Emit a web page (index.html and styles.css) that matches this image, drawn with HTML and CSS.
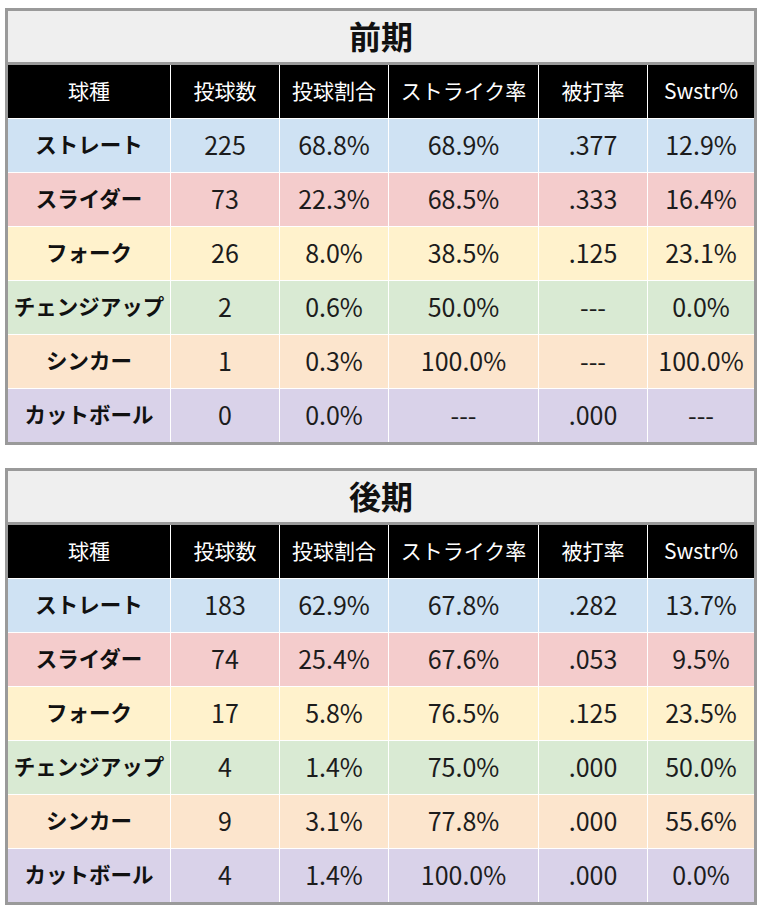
FILE: index.html
```html
<!DOCTYPE html>
<html lang="ja">
<head>
<meta charset="utf-8">
<title>球種別成績</title>
<link rel="stylesheet" href="styles.css">
</head>
<body>
<section class="stats">
  <h2 class="stats-title">前期</h2>
  <div class="grid">
    <div class="hd">球種</div><div class="hd">投球数</div><div class="hd">投球割合</div><div class="hd">ストライク率</div><div class="hd">被打率</div><div class="hd">Swstr%</div>
    <div class="c lbl blue">ストレート</div><div class="c blue">225</div><div class="c blue">68.8%</div><div class="c blue">68.9%</div><div class="c blue">.377</div><div class="c blue">12.9%</div>
    <div class="c lbl red">スライダー</div><div class="c red">73</div><div class="c red">22.3%</div><div class="c red">68.5%</div><div class="c red">.333</div><div class="c red">16.4%</div>
    <div class="c lbl yellow">フォーク</div><div class="c yellow">26</div><div class="c yellow">8.0%</div><div class="c yellow">38.5%</div><div class="c yellow">.125</div><div class="c yellow">23.1%</div>
    <div class="c lbl green">チェンジアップ</div><div class="c green">2</div><div class="c green">0.6%</div><div class="c green">50.0%</div><div class="c green">---</div><div class="c green">0.0%</div>
    <div class="c lbl orange">シンカー</div><div class="c orange">1</div><div class="c orange">0.3%</div><div class="c orange">100.0%</div><div class="c orange">---</div><div class="c orange">100.0%</div>
    <div class="c lbl purple">カットボール</div><div class="c purple">0</div><div class="c purple">0.0%</div><div class="c purple">---</div><div class="c purple">.000</div><div class="c purple">---</div>
  </div>
</section>
<section class="stats">
  <h2 class="stats-title">後期</h2>
  <div class="grid">
    <div class="hd">球種</div><div class="hd">投球数</div><div class="hd">投球割合</div><div class="hd">ストライク率</div><div class="hd">被打率</div><div class="hd">Swstr%</div>
    <div class="c lbl blue">ストレート</div><div class="c blue">183</div><div class="c blue">62.9%</div><div class="c blue">67.8%</div><div class="c blue">.282</div><div class="c blue">13.7%</div>
    <div class="c lbl red">スライダー</div><div class="c red">74</div><div class="c red">25.4%</div><div class="c red">67.6%</div><div class="c red">.053</div><div class="c red">9.5%</div>
    <div class="c lbl yellow">フォーク</div><div class="c yellow">17</div><div class="c yellow">5.8%</div><div class="c yellow">76.5%</div><div class="c yellow">.125</div><div class="c yellow">23.5%</div>
    <div class="c lbl green">チェンジアップ</div><div class="c green">4</div><div class="c green">1.4%</div><div class="c green">75.0%</div><div class="c green">.000</div><div class="c green">50.0%</div>
    <div class="c lbl orange">シンカー</div><div class="c orange">9</div><div class="c orange">3.1%</div><div class="c orange">77.8%</div><div class="c orange">.000</div><div class="c orange">55.6%</div>
    <div class="c lbl purple">カットボール</div><div class="c purple">4</div><div class="c purple">1.4%</div><div class="c purple">100.0%</div><div class="c purple">.000</div><div class="c purple">0.0%</div>
  </div>
</section>
</body>
</html>
```
FILE: styles.css
```css
html, body {
  background: #ffffff;
}
body {
  margin: 0;
  padding: 8px 5px 0 5px;
  font-family: "Noto Sans CJK JP", "Noto Sans", sans-serif;
  color: #1a1a1a;
}
.stats {
  width: 746px;
  border: 3px solid #9a9a9a;
  margin-bottom: 23px;
}
.stats-title {
  margin: 0;
  height: 54px;
  box-sizing: border-box;
  padding-bottom: 4px;
  background: #efefef;
  border-bottom: 3px solid #9a9a9a;
  display: flex;
  align-items: center;
  justify-content: center;
  font-size: 32px;
  font-weight: 700;
  color: #111;
  line-height: 1;
}
.grid {
  display: grid;
  grid-template-columns: 162px 108px 108px 149px 108px 106px;
  grid-template-rows: repeat(7, 53px);
  gap: 1px;
  background: #ffffff;
}
.hd {
  background: #000000;
  color: #ffffff;
  font-size: 21px;
  display: flex;
  align-items: center;
  justify-content: center;
  line-height: 1;
  white-space: nowrap;
  padding-bottom: 3px;
}
.c {
  display: flex;
  align-items: center;
  justify-content: center;
  font-size: 25px;
  line-height: 1;
  white-space: nowrap;
  color: #1c1c1c;
  padding-bottom: 3px;
}
.lbl {
  font-size: 21.5px;
  font-weight: 700;
  color: #111;
}
.blue { background: #cfe2f3; }
.red { background: #f4cccc; }
.yellow { background: #fff2cc; }
.green { background: #d9ead3; }
.orange { background: #fce5cd; }
.purple { background: #d9d2e9; }
```
